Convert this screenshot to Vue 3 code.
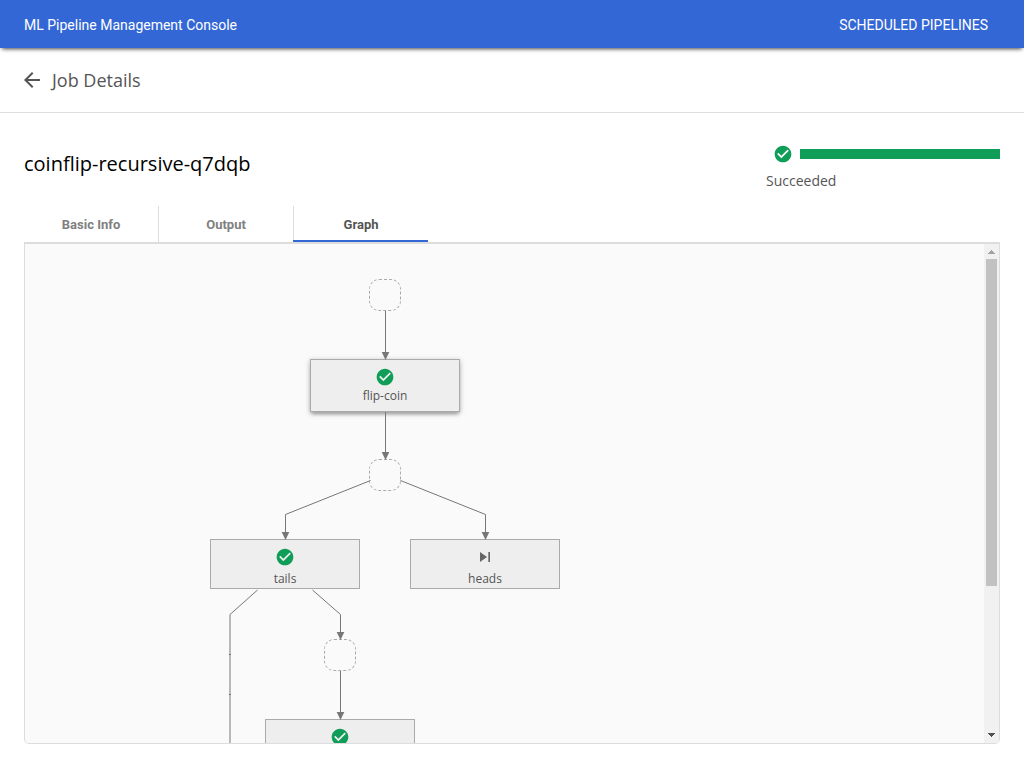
<script setup>
const tabs = ['Basic Info', 'Output', 'Graph']
const activeTab = 'Graph'

const CHECK = 'M12 2C6.48 2 2 6.48 2 12s4.48 10 10 10 10-4.48 10-10S17.52 2 12 2zm-2 15l-5-5 1.41-1.41L10 14.17l7.59-7.59L19 8l-9 9z'
const SKIP = 'M6 18l8.5-6L6 6v12zM16 6v12h2V6h-2z'

const groups = [
  { x: 344, y: 35 },
  { x: 344, y: 215 },
  { x: 299, y: 395 },
]
const nodes = [
  { x: 285, y: 115, label: 'flip-coin', status: 'ok', raised: true },
  { x: 185, y: 295, label: 'tails', status: 'ok' },
  { x: 385, y: 295, label: 'heads', status: 'skip' },
  { x: 240, y: 475, label: '', status: 'ok' },
]
const lines = [
  '360.5,67 360.5,111',
  '360.5,168 360.5,211',
  '345.5,236.5 260.5,270.5 260.5,291',
  '375.5,236.5 460.5,270.5 460.5,291',
  '232.5,346 205,370.5 205,499',
  '287.5,346 315.5,370.5 315.5,391',
  '315.5,427 315.5,471',
]
const arrows = [[360.5, 115], [360.5, 215], [260.5, 295], [460.5, 295], [315.5, 395], [315.5, 475]]
</script>

<template>
  <div class="page">
    <header class="topbar">
      <span>ML Pipeline Management Console</span>
      <span class="nav">SCHEDULED PIPELINES</span>
    </header>
    <div class="toolbar">
      <svg class="back" viewBox="0 0 24 24"><path d="M20 11H7.83l5.59-5.59L12 4l-8 8 8 8 1.41-1.41L7.83 13H20v-2z" /></svg>
      <span>Job Details</span>
    </div>
    <main class="content">
      <div class="summary">
        <h1>coinflip-recursive-q7dqb</h1>
        <div class="status">
          <div class="progress">
            <svg class="icon ok" viewBox="0 0 24 24"><path :d="CHECK" /></svg>
            <div class="bar"></div>
          </div>
          <div class="status-text">Succeeded</div>
        </div>
      </div>
      <nav class="tabs">
        <div v-for="t in tabs" :key="t" class="tab" :class="{ active: t === activeTab }">{{ t }}</div>
      </nav>
      <section class="panel">
        <div class="graph">
          <div v-for="(g, i) in groups" :key="'g' + i" class="group" :style="{ left: g.x + 'px', top: g.y + 'px' }"></div>
          <div v-for="(n, i) in nodes" :key="'n' + i" class="node" :class="{ raised: n.raised }" :style="{ left: n.x + 'px', top: n.y + 'px' }">
            <svg class="icon" :class="n.status" viewBox="0 0 24 24"><path :d="n.status === 'ok' ? CHECK : SKIP" /></svg>
            <span v-if="n.label">{{ n.label }}</span>
          </div>
          <svg class="edges" width="959" height="499">
            <polyline v-for="l in lines" :key="l" :points="l" />
            <path class="joint" d="M204 410.5h2M204 450.5h2" />
            <path v-for="(a, i) in arrows" :key="i" class="head" :d="`M${a[0] - 3.8} ${a[1] - 7}h7.6l-3.8 8z`" />
          </svg>
        </div>
        <div class="scrollbar">
          <svg class="up" viewBox="0 0 7 4" shape-rendering="crispEdges"><path d="M3 0h1v1h1v1h1v1h1v1H0V3h1V2h1V1h1z" /></svg>
          <div class="thumb"></div>
          <svg class="down" viewBox="0 0 7 4" shape-rendering="crispEdges"><path d="M0 0h7v1H6v1H5v1H4v1H3V3H2V2H1V1H0z" /></svg>
        </div>
      </section>
    </main>
  </div>
</template>

<style>
body { margin: 0; background: #fff; }
</style>

<style scoped>
.page { height: 768px; overflow: hidden; display: flex; flex-direction: column; font-family: "Open Sans", "Noto Sans", sans-serif; color: #555; }
.topbar { height: 48px; flex: none; box-sizing: border-box; padding: 1px 36px 0 24px; display: flex; align-items: center; justify-content: space-between; background: #3367d6; color: #fff; font: 14px Roboto, sans-serif; box-shadow: 0 3px 4px -2px #444; z-index: 1; }
.toolbar { height: 64px; flex: none; border-bottom: 1px solid #ddd; display: flex; align-items: center; padding-left: 20px; font-size: 18px; }
.back { width: 24px; height: 24px; fill: #555; margin-right: 8px; }
.content { padding: 0 24px; }
.summary { height: 93px; display: flex; justify-content: space-between; }
h1 { margin: 37px 0 0; font-size: 20px; line-height: 27px; font-weight: 400; color: #000; }
.status { width: 234px; padding-top: 31px; }
.progress { display: flex; align-items: center; justify-content: space-between; height: 20px; padding-left: 7px; }
.bar { width: 200px; height: 10px; background: #0f9d58; }
.icon { width: 20px; height: 20px; fill: #666; flex: none; }
.icon.ok { fill: #0f9d58; }
.status-text { font-size: 14px; line-height: 20px; margin-top: 7px; }
.tabs { display: flex; height: 36px; }
.tab { width: 135px; box-sizing: border-box; border-right: 1px solid #ddd; text-align: center; font: 700 13px/36px Roboto, sans-serif; color: #808080; padding-top: 1px; }
.tab:nth-child(2) { border-right: 0; width: 134px; }
.tab.active { border-right: 0; border-bottom: 2px solid #3367d6; color: #555; line-height: 35px; padding-left: 1px; position: relative; }
.tab.active::before { content: ""; position: absolute; left: 0; top: 0; width: 1px; height: 34px; background: #ddd; }
.panel { box-sizing: border-box; height: 502px; border: 1px solid #ddd; border-top-width: 2px; border-radius: 0 0 5px 5px; display: flex; background: #fafafa; overflow: hidden; }
.graph { position: relative; flex: 1; overflow: hidden; }
.group { position: absolute; box-sizing: border-box; width: 32px; height: 32px; border: 1px dashed #aaa; border-radius: 10px; }
.node { position: absolute; box-sizing: border-box; width: 150px; height: 50px; border: 1px solid #aaa; background: #eee; display: flex; flex-direction: column; align-items: center; padding-top: 7px; font-size: 12px; line-height: 17px; }
.node span { margin-top: 3px; }
.node.raised { height: 53px; box-shadow: 0 1px 5px #bbb, 0 3px 4px -2px #555; }
.node.raised span { margin-top: 0; }
.edges { position: absolute; left: 0; top: 0; fill: none; stroke: #777; }
.edges .head { fill: #777; stroke: none; }
.scrollbar { width: 15px; background: #f1f1f1; display: flex; flex-direction: column; align-items: center; box-sizing: border-box; padding: 6px 0; }
.scrollbar svg { width: 7px; height: 4px; fill: #a3a3a3; }
.scrollbar .down { margin-top: auto; fill: #505050; }
.thumb { width: 11px; height: 327px; margin-top: 5px; background: #c1c1c1; }
</style>
